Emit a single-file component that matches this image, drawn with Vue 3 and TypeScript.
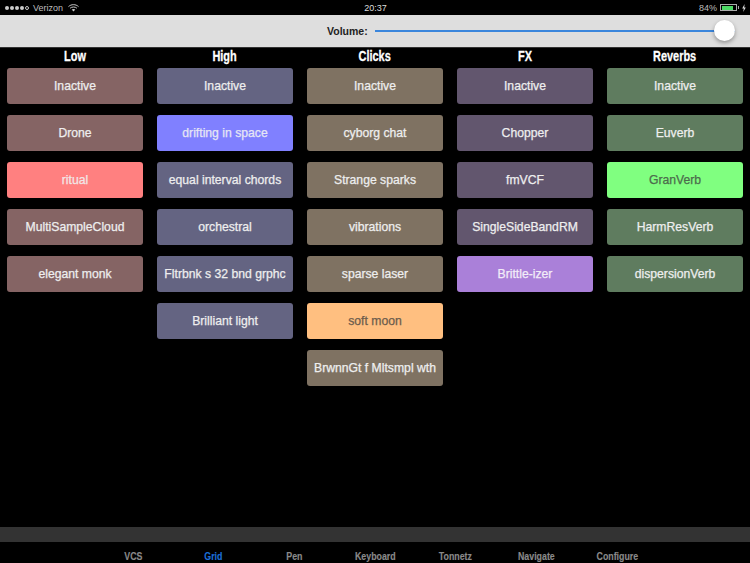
<script setup lang="ts">
interface Item {
  label: string;
  active?: boolean;
}
interface Column {
  title: string;
  color: string;
  activeColor: string;
  activeText: string;
  items: Item[];
}

const columns: Column[] = [
  {
    title: 'Low',
    color: '#856464',
    activeColor: '#ff8080',
    activeText: '#f2e6e6',
    items: [
      { label: 'Inactive' },
      { label: 'Drone' },
      { label: 'ritual', active: true },
      { label: 'MultiSampleCloud' },
      { label: 'elegant monk' },
    ],
  },
  {
    title: 'High',
    color: '#646482',
    activeColor: '#8080ff',
    activeText: '#e6e6f5',
    items: [
      { label: 'Inactive' },
      { label: 'drifting in space', active: true },
      { label: 'equal interval chords' },
      { label: 'orchestral' },
      { label: 'Fltrbnk s 32 bnd grphc' },
      { label: 'Brilliant light' },
    ],
  },
  {
    title: 'Clicks',
    color: '#7f7262',
    activeColor: '#ffbf80',
    activeText: '#6b5c4c',
    items: [
      { label: 'Inactive' },
      { label: 'cyborg chat' },
      { label: 'Strange sparks' },
      { label: 'vibrations' },
      { label: 'sparse laser' },
      { label: 'soft moon', active: true },
      { label: 'BrwnnGt f Mltsmpl wth' },
    ],
  },
  {
    title: 'FX',
    color: '#62566e',
    activeColor: '#aa80d9',
    activeText: '#f2ecf8',
    items: [
      { label: 'Inactive' },
      { label: 'Chopper' },
      { label: 'fmVCF' },
      { label: 'SingleSideBandRM' },
      { label: 'Brittle-izer', active: true },
    ],
  },
  {
    title: 'Reverbs',
    color: '#5f7c5f',
    activeColor: '#80ff80',
    activeText: '#4c6b4c',
    items: [
      { label: 'Inactive' },
      { label: 'Euverb' },
      { label: 'GranVerb', active: true },
      { label: 'HarmResVerb' },
      { label: 'dispersionVerb' },
    ],
  },
];

const tabs = ['VCS', 'Grid', 'Pen', 'Keyboard', 'Tonnetz', 'Navigate', 'Configure'];
const selectedTab = 'Grid';
</script>

<template>
  <div class="screen">
    <div class="status">
      <div class="status-left">
        <span class="signal">
          <i class="dot" /><i class="dot" /><i class="dot" /><i class="dot" /><i class="dot empty" />
        </span>
        <span>Verizon</span>
        <svg class="wifi" width="11" height="8" viewBox="0 0 11 8">
          <path d="M0.5 2.6C3.3 0 7.7 0 10.5 2.6" fill="none" stroke="#ccc" stroke-width="1" />
          <path d="M2.1 4.2C3.9 2.6 7.1 2.6 8.9 4.2" fill="none" stroke="#ccc" stroke-width="1" />
          <path d="M3.7 5.6C4.7 4.8 6.3 4.8 7.3 5.6L5.5 7.6Z" fill="#ccc" />
        </svg>
      </div>
      <div class="status-time">20:37</div>
      <div class="status-right">
        <span>84%</span>
        <span class="battery"><span class="battery-fill" /></span>
        <span class="battery-tip" />
        <svg class="bolt" width="4" height="8" viewBox="0 0 4 8">
          <path d="M2.6 0L0.2 4.4H1.8L1.2 8L3.8 3.4H2.2Z" fill="#ddd" />
        </svg>
      </div>
    </div>

    <div class="volume">
      <span class="volume-label">Volume:</span>
      <div class="track">
        <div class="thumb" />
      </div>
    </div>

    <div class="grid">
      <div v-for="col in columns" :key="col.title" class="column">
        <div class="title"><span>{{ col.title }}</span></div>
        <div
          v-for="item in col.items"
          :key="item.label"
          class="cell"
          :style="{
            backgroundColor: item.active ? col.activeColor : col.color,
            color: item.active ? col.activeText : undefined,
          }"
        >
          {{ item.label }}
        </div>
      </div>
    </div>

    <div class="tabbar-strip" />
    <div class="tabs">
      <span v-for="tab in tabs" :key="tab" class="tab" :class="{ selected: tab === selectedTab }">{{ tab }}</span>
    </div>
  </div>
</template>

<style scoped>
.screen {
  width: 750px;
  height: 563px;
  background: #000;
  display: flex;
  flex-direction: column;
  overflow: hidden;
  font-family: "Liberation Sans", Arial, sans-serif;
}

.status {
  height: 15px;
  display: grid;
  grid-template-columns: 1fr auto 1fr;
  align-items: center;
  padding: 0 4px 0 5px;
  color: #bdbdbd;
  font-size: 9px;
  flex-shrink: 0;
}

.status-left {
  display: flex;
  align-items: center;
  gap: 4px;
}

.signal {
  display: flex;
  gap: 1px;
}

.dot {
  width: 4px;
  height: 4px;
  border-radius: 50%;
  background: #ccc;
}

.dot.empty {
  background: none;
  border: 0.5px solid #ccc;
  box-sizing: border-box;
}

.wifi {
  margin-left: 1px;
}

.status-time {
  color: #ddd;
}

.status-right {
  display: flex;
  align-items: center;
  justify-content: flex-end;
  gap: 1px;
}

.battery {
  width: 17px;
  height: 7px;
  margin-left: 2px;
  border: 0.5px solid #aaa;
  box-sizing: border-box;
  padding: 0.5px;
  display: block;
}

.battery-fill {
  display: block;
  width: 84%;
  height: 100%;
  background: #4cd964;
}

.battery-tip {
  width: 1px;
  height: 3px;
  background: #aaa;
}

.bolt {
  margin-left: 2px;
}

.volume {
  height: 33px;
  background: #dedede;
  border-bottom: 1px solid #333;
  box-sizing: border-box;
  display: flex;
  align-items: center;
  padding-left: 327px;
  padding-right: 15px;
  flex-shrink: 0;
}

.volume-label {
  font-size: 10.5px;
  color: #222;
  font-weight: bold;
  width: 48px;
  flex-shrink: 0;
}

.track {
  flex: 1;
  height: 2px;
  background: #3b86dc;
  position: relative;
}

.thumb {
  position: absolute;
  right: 0;
  top: -10px;
  width: 21px;
  height: 21px;
  border-radius: 50%;
  background: #fff;
  box-shadow: 0 2px 4px rgba(0, 0, 0, 0.35);
}

.grid {
  flex: 1;
  display: flex;
  gap: 14px;
  padding: 0 7px;
}

.column {
  width: 136px;
  display: flex;
  flex-direction: column;
  gap: 10.5px;
}

.title {
  height: 19.5px;
  margin-bottom: -10.5px;
  line-height: 16px;
  text-align: center;
  color: #fff;
  font-weight: bold;
  font-size: 14px;
}

.title span {
  display: inline-block;
  transform: scaleX(0.78);
  -webkit-text-stroke: 0.3px #fff;
}

.cell {
  height: 36.5px;
  border-radius: 3px;
  display: flex;
  align-items: center;
  justify-content: center;
  color: #eeeeee;
  font-size: 12.2px;
  -webkit-text-stroke: 0.25px currentColor;
  white-space: nowrap;
}

.tabbar-strip {
  height: 15px;
  background: #333;
  flex-shrink: 0;
}

.tabs {
  height: 21px;
  display: grid;
  grid-template-columns: repeat(7, 80.7px);
  justify-content: center;
  padding-top: 7.5px;
  box-sizing: border-box;
  flex-shrink: 0;
}

.tab {
  text-align: center;
  color: #8a8a8a;
  font-weight: bold;
  font-size: 10.5px;
  line-height: 12px;
  transform: scaleX(0.84);
  -webkit-text-stroke: 0.15px currentColor;
}

.tab.selected {
  color: #1c6fd8;
}
</style>
